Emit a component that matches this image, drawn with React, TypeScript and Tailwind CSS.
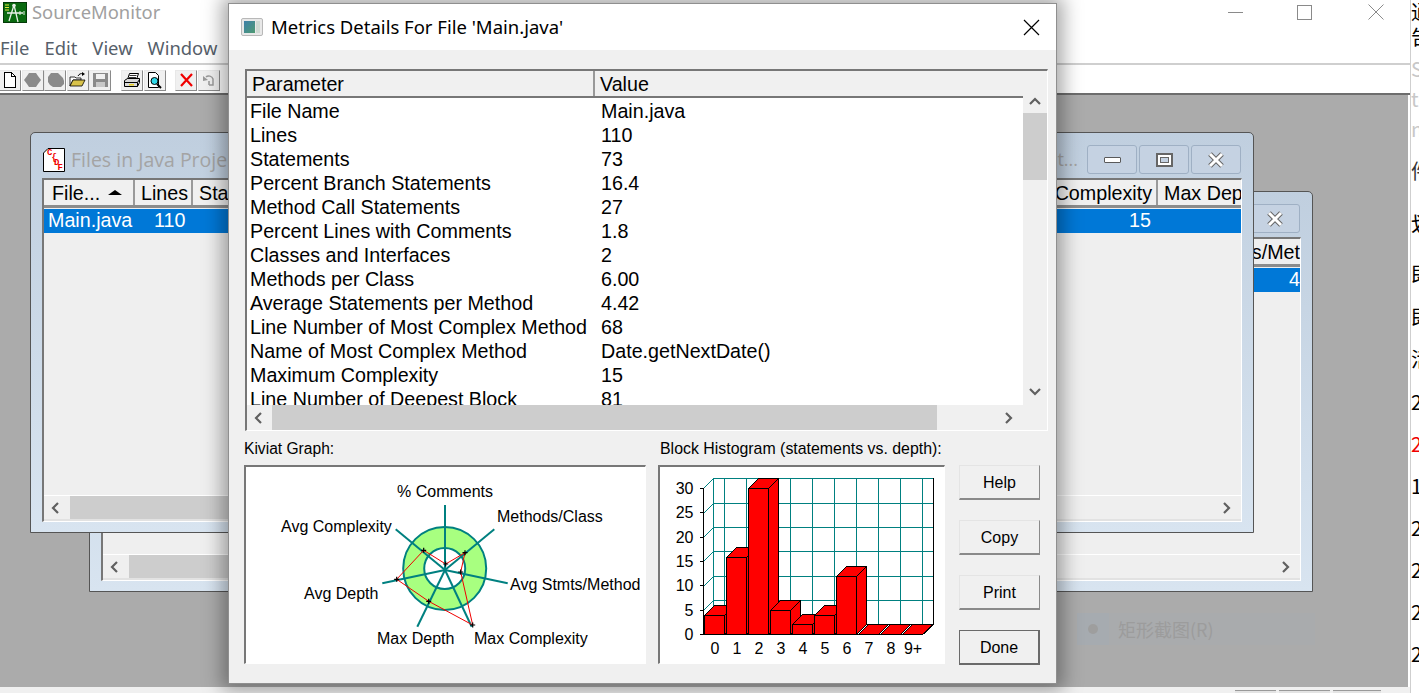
import React from 'react'

const rows: [string, string][] = [
  ['File Name', 'Main.java'],
  ['Lines', '110'],
  ['Statements', '73'],
  ['Percent Branch Statements', '16.4'],
  ['Method Call Statements', '27'],
  ['Percent Lines with Comments', '1.8'],
  ['Classes and Interfaces', '2'],
  ['Methods per Class', '6.00'],
  ['Average Statements per Method', '4.42'],
  ['Line Number of Most Complex Method', '68'],
  ['Name of Most Complex Method', 'Date.getNextDate()'],
  ['Maximum Complexity', '15'],
  ['Line Number of Deepest Block', '81'],
]

function Chevron({ dir }: { dir: 'left' | 'right' | 'up' | 'down' }) {
  const pts = {
    left: '8,2 3,7 8,12',
    right: '4,2 9,7 4,12',
    up: '2,9 7,4 12,9',
    down: '2,4 7,9 12,4',
  }[dir]
  return (
    <svg width="14" height="14" viewBox="0 0 14 14" className="shrink-0">
      <polyline points={pts} fill="none" stroke="#606060" strokeWidth="2.2" />
    </svg>
  )
}

function ToolBtn({ children }: { children?: React.ReactNode }) {
  return (
    <div className="flex h-[21px] w-[22px] items-center justify-center border border-b-[#8a8a8a] border-l-[#e8e8e8] border-r-[#8a8a8a] border-t-[#e8e8e8] bg-[#f0f0f0]">
      {children}
    </div>
  )
}

function Toolbar() {
  return (
    <div className="flex h-[30px] shrink-0 items-center border-b-2 border-[#6d6d6d] bg-white pt-[2px]">
      <div className="-ml-[1px] flex items-center gap-[0.5px]">
        <ToolBtn>
          <svg width="14" height="16" viewBox="0 0 14 16" shapeRendering="crispEdges">
            <path d="M1.500 .5h7l4 4v11h-11z" fill="#fff" stroke="#000" />
            <path d="M8.500 .5v4h4" fill="none" stroke="#000" />
          </svg>
        </ToolBtn>
        <ToolBtn>
          <svg width="17" height="16" viewBox="0 0 17 16">
            <path d="M5 1h7l2 3 3 4-3 4-2 3H5l-2-3-3-4 3-4z" fill="#8a8a8a" />
          </svg>
        </ToolBtn>
        <ToolBtn>
          <svg width="17" height="16" viewBox="0 0 17 16">
            <path d="M1 5l3-4h7l3 3 2 2 1 3v3l-3 3H6l-3-2-2-3z" fill="#8a8a8a" />
          </svg>
        </ToolBtn>
        <ToolBtn>
          <svg width="17" height="16" viewBox="0 0 17 16">
            <path d="M1 5h5l1 1h5v2H4l-3 6z" fill="#fff" stroke="#000" strokeWidth=".8" />
            <path d="M1 14l3-6h12l-3 6z" fill="#d8c24a" stroke="#000" strokeWidth=".8" />
            <path d="M9 4c1-2 3-3 5-2" fill="none" stroke="#000" />
            <path d="M13 0l3 2-3 2z" fill="#000" />
          </svg>
        </ToolBtn>
        <ToolBtn>
          <svg width="17" height="16" viewBox="0 0 17 16" shapeRendering="crispEdges">
            <path d="M1 1h15v14H1z" fill="#8a8a8a" />
            <path d="M4 2h9v5H4z" fill="#f0f0f0" />
            <path d="M4 10h9v5H4z" fill="#c8c8c8" />
          </svg>
        </ToolBtn>
      </div>
      <div className="ml-[10px] flex items-center gap-px">
        <ToolBtn>
          <svg width="18" height="17" viewBox="0 0 18 17">
            <path d="M6.500 1.500h9l-2 6h-9z" fill="#fff" stroke="#000" />
            <path d="M6.500 3.500h7M6 5.500h7" stroke="#000" strokeWidth=".8" />
            <path d="M1.500 8.500l3-2h12v4l-2 4h-13z" fill="#d8d8d8" stroke="#000" />
            <path d="M1.500 10.500h13v4" fill="none" stroke="#000" />
            <path d="M6 12h5v1.500H6z" fill="#e8d020" />
            <path d="M14.500 10.500l2-3" stroke="#000" />
          </svg>
        </ToolBtn>
        <ToolBtn>
          <svg width="16" height="17" viewBox="0 0 16 17">
            <path d="M1.500 .5h7l3 3v12h-10z" fill="#fff" stroke="#000" />
            <circle cx="7.500" cy="9" r="3.500" fill="#30d8e8" stroke="#000" />
            <path d="M10 12l4 4" stroke="#000" strokeWidth="2" />
          </svg>
        </ToolBtn>
      </div>
      <div className="ml-[9px] flex items-center gap-px">
        <ToolBtn>
          <svg width="15" height="14" viewBox="0 0 15 14">
            <path d="M2 1l11 12M13 1L2 13" stroke="#f00000" strokeWidth="2.2" />
          </svg>
        </ToolBtn>
        <ToolBtn>
          <svg width="14" height="14" viewBox="0 0 14 14">
            <path d="M7 12h4V6c-1-3-5-4-7-2" fill="none" stroke="#9a9a9a" strokeWidth="1.500" />
            <path d="M1 3v5l5-1z" fill="#9a9a9a" />
            <path d="M7 8v4" stroke="#9a9a9a" strokeWidth="1.500" />
          </svg>
        </ToolBtn>
      </div>
    </div>
  )
}

function CaptionBtn({ kind }: { kind: 'min' | 'max' | 'close' }) {
  return (
    <div className="flex h-[29px] w-[50px] items-center justify-center rounded-[3px] border border-[#9fb0c4] bg-[#c5d2e2]">
      {kind === 'min' && <div className="mt-[1px] h-[6px] w-[17px] rounded-[1px] border border-[#5a5a5a] bg-white" />}
      {kind === 'max' && (
        <div className="flex h-[14px] w-[17px] items-center justify-center border-2 border-[#666] bg-white">
          <div className="h-[6px] w-[9px] border border-[#666] bg-[#c5d2e2]" />
        </div>
      )}
      {kind === 'close' && (
        <svg width="18" height="16" viewBox="0 0 18 16">
          <path d="M3 2l12 12M15 2L3 14" stroke="#666" strokeWidth="5" />
          <path d="M3 2l12 12M15 2L3 14" stroke="#fff" strokeWidth="3" />
        </svg>
      )}
    </div>
  )
}

function FileGlyph() {
  return (
    <svg width="24" height="25" viewBox="0 0 24 25" className="shrink-0">
      <path d="M6 1.500h16.500v23H1.500V6z" fill="#fff" stroke="#000" />
      <g fill="#f00000" fontSize="9" fontFamily="Liberation Mono, monospace" fontWeight="700">
        <text x="5" y="8">C</text>
        <text x="9.500" y="13">{'{'}</text>
        <text x="12" y="18">D</text>
        <text x="15.500" y="23">F</text>
      </g>
    </svg>
  )
}

function ChildWindow({
  className,
  showTitle,
  header,
  row,
}: {
  className: string
  showTitle?: boolean
  header: React.ReactNode
  row: React.ReactNode
}) {
  return (
    <div
      className={`absolute flex h-[401px] w-[1224px] flex-col rounded-t-[5px] border border-[#555] bg-gradient-to-b from-[#c0cfdf] to-[#d8e4f0] px-[11px] pb-[10px] ${className}`}
    >
      <div className="flex h-[45px] shrink-0 items-center pr-[1px] pt-[8px]">
        {showTitle && <FileGlyph />}
        {showTitle && (
          <span className="ml-[5px] flex-1 whitespace-nowrap font-['Open_Sans',sans-serif] text-[19.5px] text-[#a4a4a4]">
            Files in Java Project
          </span>
        )}
        {!showTitle && <div className="flex-1" />}
        {showTitle && (
          <span className="mr-[9px] font-['Open_Sans',sans-serif] text-[18px] text-[#a4a4a4]">t...</span>
        )}
        <div className="flex gap-[2px]">
          <CaptionBtn kind="min" />
          <CaptionBtn kind="max" />
          <CaptionBtn kind="close" />
        </div>
      </div>
      <div className="flex min-h-0 flex-1 flex-col border-b border-l-2 border-r border-t-2 border-b-white border-l-[#777] border-r-white border-t-[#777] bg-[#efefef]">
        <div className="flex h-[28px] shrink-0 border-b-[3px] border-[#8c8c8c] text-[19.7px] leading-[26px]">{header}</div>
        <div className="mt-[1px] flex h-[24px] shrink-0 items-center bg-[#0078d7] text-[19.7px] text-white">{row}</div>
        <div className="flex-1" />
        <div className="flex h-[26px] shrink-0 items-center border-b-2 border-t border-b-[#e2e2e2] border-t-white">
          <div className="flex h-full w-[26px] items-center justify-center">
            <Chevron dir="left" />
          </div>
          <div className="h-full w-[900px] bg-[#cdcdcd]" />
          <div className="flex-1" />
          <div className="mr-[7px]">
            <Chevron dir="right" />
          </div>
        </div>
      </div>
    </div>
  )
}

function HeadCell({ className, children }: { className: string; children: React.ReactNode }) {
  return (
    <div className={`shrink-0 overflow-hidden whitespace-nowrap border-r-2 border-[#9a9a9a] bg-[#f0f0f0] ${className}`}>
      {children}
    </div>
  )
}

function Kiviat() {
  const cx = 445
  const cy = 570
  const ends = [
    [445, 505],
    [494.3, 529.3],
    [507.7, 583.3],
    [471.7, 626.7],
    [417.3, 626.7],
    [382.3, 583.3],
    [395.7, 529.3],
  ]
  const pts = [
    [445.7, 564],
    [465, 552.7],
    [460.7, 572],
    [472.7, 625],
    [428.7, 601.3],
    [396.7, 579.3],
    [423.7, 550.3],
  ]
  const labels: [string, number, number][] = [
    ['% Comments', 397, 497],
    ['Methods/Class', 497, 522],
    ['Avg Complexity', 281, 532],
    ['Avg Stmts/Method', 510, 590],
    ['Avg Depth', 304, 599],
    ['Max Depth', 377, 644],
    ['Max Complexity', 474, 644],
  ]
  return (
    <div className="h-[199px] w-[402px] border-b border-l-2 border-r border-t-2 border-b-white border-l-[#777] border-r-white border-t-[#777] bg-white">
      <svg viewBox="246 467 399 196" className="h-[196px] w-[399px]">
        <circle cx="444.7" cy="568.5" r="41.500" fill="#a8ff80" stroke="#008080" strokeWidth="2" />
        <circle cx="444.7" cy="568.5" r="20.500" fill="#fff" stroke="#008080" strokeWidth="2" />
        {ends.map(([x, y], i) => (
          <line key={i} x1={cx} y1={cy} x2={x} y2={y} stroke="#008080" strokeWidth="2" />
        ))}
        <polygon points={pts.map((p) => p.join(',')).join(' ')} fill="none" stroke="#f00000" strokeWidth="1" />
        {pts.map(([x, y], i) => (
          <path key={i} d={`M${x - 2.5} ${y}h5M${x} ${y - 2.5}v5`} stroke="#000" strokeWidth="1.200" />
        ))}
        {labels.map(([t, x, y]) => (
          <text key={t} x={x} y={y} fontSize="16" fill="#000" fontFamily="Liberation Sans, sans-serif">
            {t}
          </text>
        ))}
      </svg>
    </div>
  )
}

function Histogram() {
  const bottom = 634.5
  const tops = [615, 557, 488, 610, 624, 615, 576, 634, 634, 634]
  const vlines = [724.5, 746.5, 768.5, 790.5, 812.5, 834.5, 856.5, 878.5, 900.5, 922.5]
  const hlines = [478.5, 503.5, 527.5, 551.5, 576.5, 600.5]
  const yvals = [488.5, 512.5, 537.5, 561.5, 585.5, 610.5, 634.5]
  const ylabels = ['30', '25', '20', '15', '10', '5', '0']
  const xlabels = ['0', '1', '2', '3', '4', '5', '6', '7', '8', '9+']
  return (
    <div className="h-[199px] w-[287px] border-b border-l-2 border-r border-t-2 border-b-white border-l-[#777] border-r-white border-t-[#777] bg-white">
      <svg viewBox="660 467 284 196" className="h-[196px] w-[284px]" shapeRendering="crispEdges">
        {vlines.map((x) => (
          <line key={x} x1={x} y1={478.5} x2={x} y2={624.5} stroke="#008080" />
        ))}
        <line x1={713.5} y1={478.5} x2={713.5} y2={624.5} stroke="#008080" />
        {hlines.map((y) => (
          <line key={y} x1={713.5} y1={y} x2={933.5} y2={y} stroke="#008080" />
        ))}
        {hlines.map((y) => (
          <line key={`d${y}`} x1={703.5} y1={y + 10} x2={713.5} y2={y} stroke="#008080" />
        ))}
        <line x1={703.5} y1={488} x2={703.5} y2={635} stroke="#000" />
        <line x1={933.5} y1={478} x2={933.5} y2={624.5} stroke="#000" />
        <line x1={713.5} y1={624.5} x2={933.5} y2={624.5} stroke="#000" />
        <line x1={923.5} y1={634.5} x2={933.5} y2={624.5} stroke="#000" />
        <line x1={700} y1={634.5} x2={923} y2={634.5} stroke="#000" />
        {yvals.map((y) => (
          <line key={y} x1={700} y1={y} x2={703.5} y2={y} stroke="#000" />
        ))}
        {tops.map((t, i) => {
          const x = 704.5 + i * 22
          const top = t + 0.5
          return (
            <g key={i} fill="#ff0000" stroke="#000" strokeWidth="1">
              <path d={`M${x + 20} ${top}l10 -10v${bottom - top}l-10 10z`} />
              <path d={`M${x} ${top}l10 -10h20l-10 10z`} />
              <rect x={x} y={top} width={20} height={bottom - top} />
            </g>
          )
        })}
        {ylabels.map((l, i) => (
          <text key={l} x={693.5} y={yvals[i] + 5} textAnchor="end" fontSize="16" fill="#000" fontFamily="Liberation Sans, sans-serif">
            {l}
          </text>
        ))}
        {xlabels.map((l, i) => (
          <text key={l} x={715 + i * 22} y={654} textAnchor="middle" fontSize="16" fill="#000" fontFamily="Liberation Sans, sans-serif">
            {l}
          </text>
        ))}
      </svg>
    </div>
  )
}

function DlgButton({ label, primary }: { label: string; primary?: boolean }) {
  return (
    <button
      className={`flex h-[35px] w-[81px] items-center justify-center border bg-[#f0f0f0] pt-[2px] text-[16px] text-black ${
        primary
          ? 'border-b-2 border-r-2 border-[#6a6a6a]'
          : 'border-b-2 border-b-[#8a8a8a] border-l-[#e4e4e4] border-r-[#8a8a8a] border-t-[#e4e4e4]'
      }`}
    >
      {label}
    </button>
  )
}

function MetricsDialog() {
  return (
    <div className="absolute left-[228px] top-[3px] flex h-[681px] w-[829px] flex-col border border-[#8f8f8f] bg-[#f0f0f0] font-['Liberation_Sans',sans-serif] shadow-[0_0_18px_6px_rgba(0,0,0,0.35)]">
      <div className="flex h-[46px] shrink-0 items-center bg-white pl-[12px] pr-[16px]">
        <div className="flex h-[18px] w-[22px] gap-[1px] rounded-[2px] border border-[#b8b8b8] bg-[#e8e8e8] p-[2px]">
          <div className="h-full w-[11px] bg-gradient-to-br from-[#3f7fa8] to-[#4f9a70]" />
          <div className="h-full w-[4px] bg-[#cfdad3]" />
        </div>
        <span className="ml-[8px] flex-1 font-['Noto_Sans',sans-serif] text-[18.5px] text-black">
          Metrics Details For File 'Main.java'
        </span>
        <svg width="17" height="17" viewBox="0 0 17 17">
          <path d="M1 1l15 15M16 1L1 16" stroke="#000" strokeWidth="1.200" />
        </svg>
      </div>
      <div className="flex min-h-0 flex-1 flex-col pl-[16px] pr-[9px] pt-[19px]">
        <div className="flex h-[362px] w-[803px] shrink-0 flex-col border-b border-l-2 border-r border-t-2 border-b-white border-l-[#777] border-r-white border-t-[#777]">
          <div className="flex min-h-0 flex-1">
            <div className="flex min-w-0 flex-1 flex-col bg-white">
              <div className="flex h-[27px] shrink-0 border-b-2 border-[#777] bg-[#f0f0f0] text-[19.7px] leading-[26px] text-black">
                <div className="w-[348px] border-r-2 border-[#999] pl-[5px]">Parameter</div>
                <div className="flex-1 pl-[5px]">Value</div>
              </div>
              <div className="min-h-0 flex-1 overflow-hidden pt-[1px] text-[19.7px] leading-[24px] text-black">
                {rows.map(([name, value]) => (
                  <div key={name} className="flex h-[24px] whitespace-nowrap">
                    <div className="w-[351px] pl-[3px]">{name}</div>
                    <div className="pl-[3px]">{value}</div>
                  </div>
                ))}
              </div>
            </div>
            <div className="flex w-[24px] shrink-0 flex-col items-center bg-[#f0f0f0]">
              <div className="flex h-[42px] items-end pb-[4px]">
                <Chevron dir="up" />
              </div>
              <div className="h-[67px] w-full bg-[#cdcdcd]" />
              <div className="flex-1" />
              <div className="flex h-[26px] items-center">
                <Chevron dir="down" />
              </div>
            </div>
          </div>
          <div className="flex h-[25px] shrink-0 items-center bg-[#f0f0f0]">
            <div className="flex h-full w-[25px] items-center justify-center">
              <Chevron dir="left" />
            </div>
            <div className="h-full w-[665px] bg-[#cdcdcd]" />
            <div className="flex-1" />
            <div className="mr-[31px]">
              <Chevron dir="right" />
            </div>
          </div>
        </div>
        <div className="-ml-[1px] mt-[8px] flex">
          <div className="flex w-[402px] shrink-0 flex-col">
            <div className="h-[26px] text-[15.6px] leading-[20px] text-black">Kiviat Graph:</div>
            <Kiviat />
          </div>
          <div className="ml-[12px] flex w-[287px] shrink-0 flex-col">
            <div className="h-[26px] whitespace-nowrap pl-[2px] text-[15.9px] leading-[20px] text-black">
              Block Histogram (statements vs. depth):
            </div>
            <Histogram />
          </div>
          <div className="ml-[14px] flex flex-col gap-[20px] pt-[26px]">
            <DlgButton label="Help" />
            <DlgButton label="Copy" />
            <DlgButton label="Print" />
            <DlgButton label="Done" primary />
          </div>
        </div>
      </div>
    </div>
  )
}

const strip = [
  { t: '通', c: 'h-[25px] text-black' },
  { t: '告', c: 'h-[32px] text-black' },
  { t: 'S:', c: 'h-[30px] text-[#c8c8c8]' },
  { t: 'te', c: 'h-[30px] text-[#c8c8c8]' },
  { t: 'm', c: 'h-[42px] text-[#c8c8c8]' },
  { t: '件', c: 'h-[53px] text-[#333]' },
  { t: '划', c: 'h-[50px] text-black' },
  { t: '即', c: 'h-[43px] text-black' },
  { t: '即', c: 'h-[42px] text-black' },
  { t: '活', c: 'h-[43px] text-black' },
  { t: '2', c: 'h-[42px] text-black' },
  { t: '2', c: 'h-[42px] text-[#f00000]' },
  { t: '1', c: 'h-[42px] text-black' },
  { t: '2', c: 'h-[42px] text-black' },
  { t: '2', c: 'h-[42px] text-black' },
  { t: '2', c: 'h-[42px] text-black' },
  { t: '2', c: 'h-[42px] text-black' },
]

export default function App() {
  return (
    <div className="relative flex h-[693px] w-[1419px] overflow-hidden bg-white font-['Liberation_Sans',sans-serif]">
      <div className="flex w-[1410px] shrink-0 flex-col">
        <div className="flex h-[24px] shrink-0 items-center pl-[3px]">
          <svg width="24" height="21" viewBox="0 0 24 21">
            <rect x=".5" y=".5" width="23" height="20" fill="#0a6a10" stroke="#043a08" />
            <path d="M11 3L6 19M11 3l4 17M4 11h16" stroke="#e8f0e8" strokeWidth="1.300" fill="none" />
            <path d="M2 3h4M2 5.500h4M2 8h4" stroke="#e8e840" />
            <circle cx="11" cy="3.500" r="1.800" fill="#e8f0e8" />
            <path d="M17 9v4M21 9v4" stroke="#e8f0e8" />
          </svg>
          <span className="ml-[5px] font-['Noto_Sans',sans-serif] text-[18.4px] text-[#a0a0a0]">SourceMonitor</span>
          <div className="flex-1" />
          <div className="mr-[54px] h-px w-[15px] bg-[#8a8a8a]" />
          <div className="mr-[56px] h-[15px] w-[15px] border border-[#8a8a8a]" />
          <svg width="16" height="16" viewBox="0 0 16 16" className="mr-[26px]">
            <path d="M.5.500l15 15M15.500.500l-15 15" stroke="#8a8a8a" />
          </svg>
        </div>
        <div className="flex h-[41px] shrink-0 items-center gap-[15px] border-b-2 border-[#cfcfcf] pt-[9px] font-['Noto_Sans',sans-serif] text-[18.4px] text-[#56606a]">
          <span>File</span>
          <span>Edit</span>
          <span>View</span>
          <span>Window</span>
        </div>
        <Toolbar />
        <div className="relative flex min-h-0 flex-1 flex-col border-r-2 border-white bg-[#ababab]">
          <div className="flex-1" />
          {/* faded snip tool tooltip */}
          <div className="absolute left-[1077px] top-[518px] flex h-[32px] w-[238px] items-center bg-[#a9abad]">
            <div className="flex h-full w-[32px] items-center justify-center bg-[#a6abb0]">
              <div className="h-[10px] w-[10px] rounded-full bg-[#9e9e9e]" />
            </div>
            <span className="ml-[9px] font-['Noto_Sans_CJK_SC',sans-serif] text-[18px] text-[#9c9c9c]">矩形截图(R)</span>
          </div>
          <ChildWindow
            className="left-[89px] top-[96px]"
            header={
              <>
                <div className="flex-1" />
                <div className="w-[50px] overflow-hidden whitespace-nowrap text-right text-black">s/Met</div>
              </>
            }
            row={
              <>
                <div className="flex-1" />
                <span className="overflow-hidden text-right">4</span>
              </>
            }
          />
          <ChildWindow
            className="left-[30px] top-[37px]"
            showTitle
            header={
              <>
                <HeadCell className="flex w-[91px] items-center gap-[7px] pl-[8px]">
                  <span>File...</span>
                  <svg width="16" height="8" viewBox="0 0 16 8">
                    <path d="M1 6h14L8 1z" fill="#000" />
                  </svg>
                </HeadCell>
                <HeadCell className="w-[58px] pl-[6px]">Lines</HeadCell>
                <HeadCell className="flex-1 pl-[6px]">Statements</HeadCell>
                <HeadCell className="w-[120px] pr-[4px] text-right">Complexity</HeadCell>
                <div className="w-[83px] overflow-hidden whitespace-nowrap bg-[#f0f0f0] pl-[6px]">Max Dep</div>
              </>
            }
            row={
              <>
                <span className="w-[110px] shrink-0 pl-[4px]">Main.java</span>
                <span>110</span>
                <div className="flex-1" />
                <span className="mr-[90px]">15</span>
              </>
            }
          />
        </div>
        <div className="flex h-[6px] shrink-0 items-start bg-[#f0f0f0] pl-[1235px] pt-[3px]">
          <div className="h-[3px] w-[41px] border-t border-[#9a9a9a] bg-[#e4e4e4]" />
          <div className="ml-[3px] h-[3px] w-[51px] border-t border-[#9a9a9a] bg-[#e4e4e4]" />
          <div className="ml-[3px] h-[3px] w-[48px] border-t border-[#9a9a9a] bg-[#e4e4e4]" />
        </div>
      </div>
      <div className="flex w-[9px] shrink-0 flex-col overflow-hidden border-l border-[#cfcfcf] bg-white font-['Noto_Sans_CJK_SC',sans-serif] text-[20px] leading-[24px]">
        {strip.map((s, i) => (
          <div key={i} className={`shrink-0 whitespace-nowrap ${s.c}`}>
            {s.t}
          </div>
        ))}
      </div>
      <MetricsDialog />
    </div>
  )
}
